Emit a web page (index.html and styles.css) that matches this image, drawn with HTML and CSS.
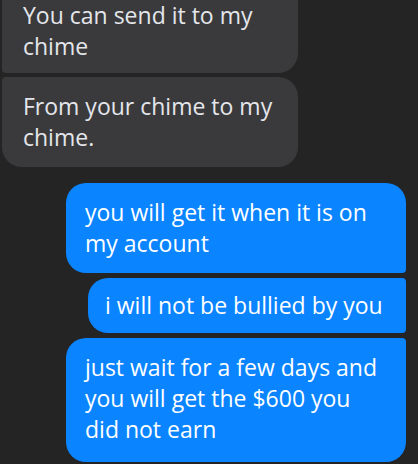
FILE: index.html
```html
<!DOCTYPE html>
<html lang="en">
<head>
    <meta charset="UTF-8">
    <meta name="viewport" content="width=device-width, initial-scale=1.0">
    <title>Chat</title>
    <link rel="stylesheet" href="styles.css">
</head>
<body>
<div class="thread">
    <div class="group incoming">
        <div class="bubble first">You can send it to my<br>chime</div>
        <div class="bubble last">From your chime to my<br>chime.</div>
    </div>

    <div class="group outgoing">
        <div class="bubble first wide">you will get it when it is on<br>my account</div>
        <div class="bubble middle short">i will not be bullied by you</div>
        <div class="bubble last wide">just wait for a few days and<br>you will get the $600 you<br>did not earn</div>
    </div>
</div>
</body>
</html>
```

FILE: styles.css
```css
body {
    margin: 0;
    background-color: #242424;
    font-family: "Open Sans", "Noto Sans", Arial, sans-serif;
    overflow: hidden;
}
.thread {
    padding: 0 12px 0 2px;
    display: flex;
    flex-direction: column;
    gap: 16px;
}
.group {
    display: flex;
    flex-direction: column;
    gap: 4px;
}
.incoming {
    align-items: flex-start;
}
.outgoing {
    align-items: flex-end;
    gap: 5px;
}
.bubble {
    box-sizing: border-box;
    padding: 14px 19px;
    font-size: 23px;
    line-height: 31px;
    border-radius: 20px;
    white-space: nowrap;
}
.incoming .bubble {
    width: 296px;
    background-color: #3a3a3c;
    color: #e4e6eb;
    padding-left: 21px;
}
.incoming .first {
    padding-top: 0;
    padding-bottom: 11px;
    border-top-left-radius: 0;
    border-top-right-radius: 0;
    border-bottom-left-radius: 4px;
}
.incoming .last {
    border-top-left-radius: 4px;
}
.outgoing .bubble {
    background-color: #0a84ff;
    color: #ffffff;
}
.outgoing .wide {
    width: 340px;
}
.outgoing .short {
    width: 318px;
    padding: 12px 17px;
}
.outgoing .first {
    border-bottom-right-radius: 4px;
}
.outgoing .middle {
    border-top-right-radius: 4px;
    border-bottom-right-radius: 4px;
}
.outgoing .last {
    padding-bottom: 17px;
    border-top-right-radius: 4px;
}
```
